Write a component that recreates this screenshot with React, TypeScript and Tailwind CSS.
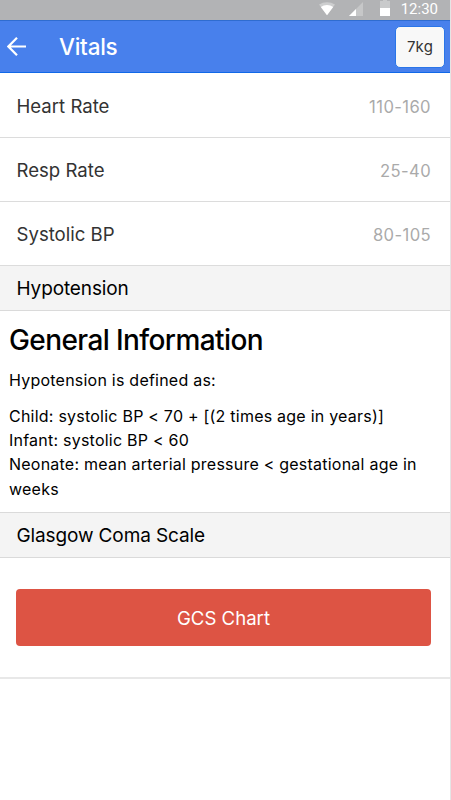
import { ReactNode } from "react";

interface Vital {
  label: string;
  range: string;
}

const vitals: Vital[] = [
  { label: "Heart Rate", range: "110-160" },
  { label: "Resp Rate", range: "25-40" },
  { label: "Systolic BP", range: "80-105" },
];

const StatusBar = () => (
  <div className="flex h-5 items-start justify-end bg-[#b2b3b5] pr-[12px]">
    <svg width="16" height="14" viewBox="0 0 16 14" className="mt-[2px] mr-[14px]">
      <path d="M0 2.6C4.5-.7 11.5-.7 16 2.6L8 13.2z" fill="#cdcecf" />
      <path d="M1.8 5C5.5 2.2 10.5 2.2 14.2 5L8 13.2z" fill="#fff" />
    </svg>
    <svg width="14" height="14" viewBox="0 0 14 14" className="mt-[2px] mr-[17px]">
      <path d="M0 14L14 0V14z" fill="#c6c7c8" />
      <path d="M0 14L7 7V14z" fill="#fff" />
    </svg>
    <svg width="10" height="16" viewBox="0 0 10 16" className="mr-[11px]">
      <path d="M0 1H3V0H7V1H10V8H0z" fill="#c9cacb" />
      <path d="M0 8H10V16H0z" fill="#fff" />
    </svg>
    <span className="font-[Roboto,sans-serif] text-[15px] leading-[19px] text-white">12:30</span>
  </div>
);

const Header = () => (
  <header className="flex h-[53px] items-center border-t border-b border-t-[#2f6cd0] border-b-[#1068e8] bg-[#4880ec] pl-[7px] pr-[5px]">
    <button aria-label="Back" className="mr-[33px]">
      <svg width="19" height="19" viewBox="0 0 19 19" fill="none" stroke="#fff" strokeWidth="2.2">
        <path d="M10 .8L1.4 9.5L10 18.2M1.4 9.5H19" />
      </svg>
    </button>
    <h1 className="flex-1 pt-px text-[22.5px] tracking-[-0.25px] font-medium text-white">Vitals</h1>
    <button className="h-[42px] w-[50px] rounded-[5px] border border-[#2a75e8] bg-[#f8f8f8] pt-[2px] text-[15px] tracking-[0.2px] text-[#333]">
      7kg
    </button>
  </header>
);

const VitalRow = ({ label, range }: Vital) => (
  <li className="flex h-16 items-center justify-between border-b border-[#dcdcdc] pt-[3px] pl-[16.5px] pr-[19px]">
    <span className="text-[18.6px] text-[#333]">{label}</span>
    <span className="text-[16.6px] tracking-[0.4px] text-[#aaa]">{range}</span>
  </li>
);

const Divider = ({ children }: { children: ReactNode }) => (
  <h2 className="flex h-[45px] items-center border-b border-[#dadada] bg-[#f4f4f4] pt-[2px] pl-[16.5px] text-[19px] tracking-[-0.12px] text-black">
    {children}
  </h2>
);

const App = () => {
  return (
    <div className="h-[800px] w-[451px] overflow-hidden border-r border-[#e5e5e5] bg-white font-[Inter,sans-serif] text-black">
      <StatusBar />
      <Header />
      <main>
        <ul className="pt-px">
          {vitals.map((vital) => (
            <VitalRow key={vital.label} {...vital} />
          ))}
        </ul>
        <Divider>Hypotension</Divider>
        <section className="h-[202px] border-b border-[#dadada] px-[9px] pt-[11px]">
          <h3 className="text-[28px] leading-9 font-medium tracking-[-0.6px]">General Information</h3>
          <p className="mt-[10px] text-[16px] leading-6 tracking-[0.23px]">Hypotension is defined as:</p>
          <p className="mt-3 text-[16px] leading-[24.2px] tracking-[0.23px]">
            Child: systolic BP &lt; 70 + [(2 times age in years)]
            <br />
            Infant: systolic BP &lt; 60
            <br />
            Neonate: mean arterial pressure &lt; gestational age in weeks
          </p>
        </section>
        <Divider>Glasgow Coma Scale</Divider>
        <div className="border-b-2 border-[#e8e8e8] pt-[31px] pr-[19px] pb-[31px] pl-4">
          <button className="h-[57px] w-full rounded-[4px] bg-[#dd5444] pt-[3px] text-[18.6px] text-white">
            GCS Chart
          </button>
        </div>
      </main>
    </div>
  );
};

export default App;
